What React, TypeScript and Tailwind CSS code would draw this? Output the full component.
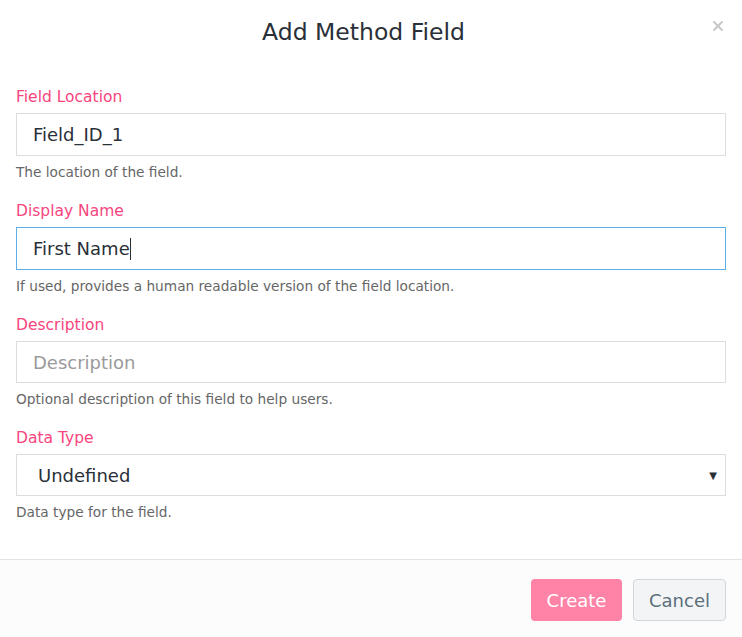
import { X } from 'lucide-react';

const font = { fontFamily: '"DejaVu Sans", "Open Sans", sans-serif' };

function Field({
  label,
  help,
  children,
}: {
  label: string;
  help: string;
  children: React.ReactNode;
}) {
  return (
    <div className="flex flex-col">
      <label className="text-[15.5px] leading-[20px] text-[#f7457e] mb-[6px]">{label}</label>
      {children}
      <p className="text-[13.7px] leading-[18px] text-[#666] mt-[7px]">{help}</p>
    </div>
  );
}

export default function App() {
  return (
    <div className="w-[742px] h-[637px] bg-white flex flex-col overflow-hidden" style={font}>
      {/* Header */}
      <div className="relative h-[66px] flex items-center justify-center pr-[15px]">
        <h2 className="text-[23.5px] text-[#2a3038]">Add Method Field</h2>
        <button className="absolute right-[16px] top-[18px] text-[#c7c7c7]">
          <X className="w-[16px] h-[16px]" strokeWidth={3} />
        </button>
      </div>

      {/* Body */}
      <div className="flex-1 px-4 pt-[21px] flex flex-col gap-[20px]">
        <Field label="Field Location" help="The location of the field.">
          <div className="h-[43px] border border-[#ddd] flex items-center px-4 text-[18px] text-[#2a3038]">
            Field_ID_1
          </div>
        </Field>
        <Field label="Display Name" help="If used, provides a human readable version of the field location.">
          <div className="h-[43px] border border-[#5daee6] flex items-center px-4 text-[18px] text-[#2a3038]">
            First Name<span className="w-px h-[22px] bg-[#2a3038]" />
          </div>
        </Field>
        <Field label="Description" help="Optional description of this field to help users.">
          <div className="h-[42px] border border-[#ddd] flex items-center px-4 text-[18px] text-[#9a9a9a]">
            Description
          </div>
        </Field>
        <Field label="Data Type" help="Data type for the field.">
          <div className="h-[42px] border border-[#ddd] flex items-center justify-between pl-[21px] pr-[8px] text-[18px] text-[#2a3038]">
            <span>Undefined</span>
            <span className="text-[10px] text-[#2a3038]">▼</span>
          </div>
        </Field>
      </div>

      {/* Footer */}
      <div className="h-[78px] border-t border-[#e3e3e3] bg-[#fcfcfc] flex items-center justify-end gap-[11px] px-4 pt-[3px]">
        <button className="w-[91px] h-[42px] rounded-[4px] bg-[#ff82a7] text-white text-[18px]">Create</button>
        <button className="w-[93px] h-[42px] rounded-[4px] bg-[#f3f4f5] border border-[#cfd6da] text-[#5a6f7b] text-[18px]">
          Cancel
        </button>
      </div>
    </div>
  );
}
